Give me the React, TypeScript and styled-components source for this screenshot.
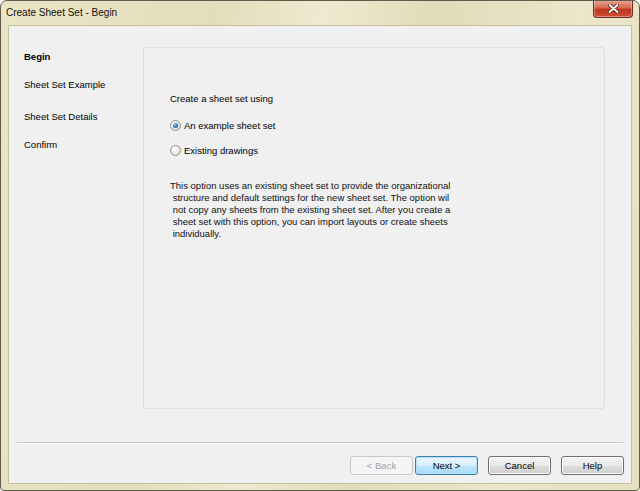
import React from "react";
import styled, { createGlobalStyle } from "styled-components";

const GlobalStyle = createGlobalStyle`
    html, body {
        margin: 0;
        padding: 0;
        background: #ffffff;
    }
    body {
        font-family: "Liberation Sans", Arial, sans-serif;
        font-size: 9.5px;
        color: #000;
    }
`;

const Window = styled.div`
    box-sizing: border-box;
    width: 640px;
    height: 491px;
    display: flex;
    flex-direction: column;
    border: 1px solid #5e5a4c;
    border-radius: 7px 7px 4px 4px;
    background: linear-gradient(100deg, #ebe5c6 0%, #e4ddbc 30%, #efe9d0 45%, #e2dbb9 60%, #ece6cb 80%, #e6dfc0 100%);
    overflow: hidden;
`;

const TitleBar = styled.div`
    height: 24px;
    display: flex;
    align-items: flex-start;
    justify-content: space-between;
    padding-left: 5px;
    flex-shrink: 0;
`;

const Title = styled.span`
    margin-top: 6px;
    font-size: 10px;
    color: #111;
`;

const CloseButton = styled.div`
    width: 38px;
    height: 17px;
    margin-right: 6px;
    margin-top: -1px;
    border: 1px solid #6d2b22;
    border-top: none;
    border-radius: 0 0 4px 4px;
    background: linear-gradient(#e8a898 0%, #d66a52 45%, #c0361f 55%, #cc4f34 100%);
    display: flex;
    align-items: center;
    justify-content: center;
    box-shadow: inset 0 0 0 1px rgba(255, 255, 255, 0.35);
`;

const Client = styled.div`
    flex: 1;
    margin: 0 7px 6px 7px;
    border: 1px solid #c4bea2;
    background: #f0f0f0;
    display: flex;
    flex-direction: column;
`;

const Body = styled.div`
    display: flex;
    height: 383px;
`;

const Nav = styled.div`
    width: 134px;
    padding: 25px 0 0 15px;
    box-sizing: border-box;
    display: flex;
    flex-direction: column;
`;

const NavItem = styled.div<{ $active?: boolean; $space: number }>`
    height: 12px;
    line-height: 12px;
    margin-bottom: ${(p) => p.$space}px;
    font-weight: ${(p) => (p.$active ? "bold" : "normal")};
    color: #000;
`;

const Panel = styled.div`
    margin-top: 21px;
    width: 462px;
    height: 362px;
    box-sizing: border-box;
    border: 1px solid #dbe1e4;
    border-radius: 3px;
    background: #f0f0f0;
    padding: 45px 0 0 26px;
`;

const Heading = styled.div`
    height: 12px;
    line-height: 12px;
    margin-bottom: 14px;
`;

const RadioRow = styled.label`
    display: flex;
    align-items: center;
    gap: 3px;
    height: 12px;
    margin-bottom: 13px;
`;

const RadioCircle = styled.span<{ $checked?: boolean }>`
    width: 11px;
    height: 11px;
    box-sizing: border-box;
    border-radius: 50%;
    border: 1px solid #8e8f8f;
    background: radial-gradient(circle at 40% 35%, #ffffff 0%, #e6e6e6 60%, #cfcfcf 100%);
    display: flex;
    align-items: center;
    justify-content: center;
    &::after {
        content: "";
        display: ${(p) => (p.$checked ? "block" : "none")};
        width: 5px;
        height: 5px;
        border-radius: 50%;
        background: radial-gradient(circle at 40% 35%, #8fd0f5 0%, #1f6fb2 60%, #0c4c8a 100%);
    }
`;

const Description = styled.p`
    margin: 24px 0 0 0;
    white-space: pre;
    line-height: 12px;
    color: #111;
`;

const Separator = styled.div`
    margin: 33px 8px 0 8px;
    height: 0;
    border-top: 1px solid #c6c6c6;
    border-bottom: 1px solid #ffffff;
`;

const Footer = styled.div`
    display: flex;
    justify-content: flex-end;
    align-items: center;
    gap: 10px;
    margin-top: 12px;
    padding-right: 7px;
`;

const ButtonGroup = styled.div`
    display: flex;
    gap: 2px;
`;

const Button = styled.button<{ $variant?: "default" | "disabled" }>`
    width: 63px;
    height: 19px;
    box-sizing: border-box;
    padding: 0;
    font-family: "Liberation Sans", Arial, sans-serif;
    font-size: 9.5px;
    border-radius: 3px;
    color: ${(p) => (p.$variant === "disabled" ? "#a3a3a3" : "#000")};
    border: 1px solid
        ${(p) =>
            p.$variant === "disabled" ? "#c8c8c8" : p.$variant === "default" ? "#3c7fb1" : "#707070"};
    background: ${(p) =>
        p.$variant === "disabled"
            ? "#f4f4f4"
            : p.$variant === "default"
            ? "linear-gradient(#eaf6fd 0%, #d9f0fc 50%, #bee6fd 51%, #a7d9f5 100%)"
            : "linear-gradient(#f2f2f2 0%, #ebebeb 50%, #dddddd 51%, #cfcfcf 100%)"};
    box-shadow: ${(p) =>
        p.$variant === "default" ? "inset 0 0 0 1px #b6e0f7" : p.$variant === "disabled" ? "none" : "inset 0 0 0 1px #fcfcfc"};
`;

const CloseGlyph = () => (
    <svg width="11" height="9" viewBox="0 0 11 9">
        <path d="M1.5 1 L9.5 8 M9.5 1 L1.5 8" stroke="#5a1d12" strokeWidth="3.6" strokeLinecap="round" />
        <path d="M1.5 1 L9.5 8 M9.5 1 L1.5 8" stroke="#ffffff" strokeWidth="1.8" strokeLinecap="round" />
    </svg>
);

const navItems = [
    { label: "Begin", active: true, space: 16 },
    { label: "Sheet Set Example", space: 20 },
    { label: "Sheet Set Details", space: 16 },
    { label: "Confirm", space: 0 },
];

const description = `This option uses an existing sheet set to provide the organizational
 structure and default settings for the new sheet set. The option wil
 not copy any sheets from the existing sheet set. After you create a
 sheet set with this option, you can import layouts or create sheets
 individually.`;

function App() {
    return (
        <>
            <GlobalStyle />
            <Window>
                <TitleBar>
                    <Title>Create Sheet Set - Begin</Title>
                    <CloseButton>
                        <CloseGlyph />
                    </CloseButton>
                </TitleBar>
                <Client>
                    <Body>
                        <Nav>
                            {navItems.map((item) => (
                                <NavItem key={item.label} $active={item.active} $space={item.space}>
                                    {item.label}
                                </NavItem>
                            ))}
                        </Nav>
                        <Panel>
                            <Heading>Create a sheet set using</Heading>
                            <RadioRow>
                                <RadioCircle $checked />
                                An example sheet set
                            </RadioRow>
                            <RadioRow>
                                <RadioCircle />
                                Existing drawings
                            </RadioRow>
                            <Description>{description}</Description>
                        </Panel>
                    </Body>
                    <Separator />
                    <Footer>
                        <ButtonGroup>
                            <Button $variant="disabled">&lt; Back</Button>
                            <Button $variant="default">Next &gt;</Button>
                        </ButtonGroup>
                        <Button>Cancel</Button>
                        <Button>Help</Button>
                    </Footer>
                </Client>
            </Window>
        </>
    );
}

export default App;
